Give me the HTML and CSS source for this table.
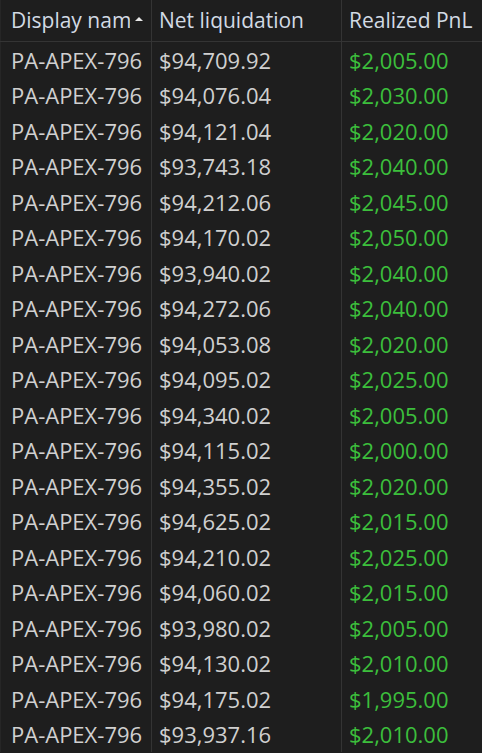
FILE: index.html
```html
<!DOCTYPE html>
<html lang="en">
<head>
    <meta charset="UTF-8">
    <title>Accounts</title>
    <link rel="stylesheet" href="styles.css">
</head>
<body>
<div class="grid">

    <!-- header -->
    <div class="row head">
        <div class="cell name sorted"><span class="label">Display name</span><span class="sort-arrow"></span></div>
        <div class="cell">Net liquidation</div>
        <div class="cell">Realized PnL</div>
    </div>

    <!-- rows -->
    <div class="row"><div class="cell name">PA-APEX-796</div><div class="cell">$94,709.92</div><div class="cell pos">$2,005.00</div></div>
    <div class="row"><div class="cell name">PA-APEX-796</div><div class="cell">$94,076.04</div><div class="cell pos">$2,030.00</div></div>
    <div class="row"><div class="cell name">PA-APEX-796</div><div class="cell">$94,121.04</div><div class="cell pos">$2,020.00</div></div>
    <div class="row"><div class="cell name">PA-APEX-796</div><div class="cell">$93,743.18</div><div class="cell pos">$2,040.00</div></div>
    <div class="row"><div class="cell name">PA-APEX-796</div><div class="cell">$94,212.06</div><div class="cell pos">$2,045.00</div></div>
    <div class="row"><div class="cell name">PA-APEX-796</div><div class="cell">$94,170.02</div><div class="cell pos">$2,050.00</div></div>
    <div class="row"><div class="cell name">PA-APEX-796</div><div class="cell">$93,940.02</div><div class="cell pos">$2,040.00</div></div>
    <div class="row"><div class="cell name">PA-APEX-796</div><div class="cell">$94,272.06</div><div class="cell pos">$2,040.00</div></div>
    <div class="row"><div class="cell name">PA-APEX-796</div><div class="cell">$94,053.08</div><div class="cell pos">$2,020.00</div></div>
    <div class="row"><div class="cell name">PA-APEX-796</div><div class="cell">$94,095.02</div><div class="cell pos">$2,025.00</div></div>
    <div class="row"><div class="cell name">PA-APEX-796</div><div class="cell">$94,340.02</div><div class="cell pos">$2,005.00</div></div>
    <div class="row"><div class="cell name">PA-APEX-796</div><div class="cell">$94,115.02</div><div class="cell pos">$2,000.00</div></div>
    <div class="row"><div class="cell name">PA-APEX-796</div><div class="cell">$94,355.02</div><div class="cell pos">$2,020.00</div></div>
    <div class="row"><div class="cell name">PA-APEX-796</div><div class="cell">$94,625.02</div><div class="cell pos">$2,015.00</div></div>
    <div class="row"><div class="cell name">PA-APEX-796</div><div class="cell">$94,210.02</div><div class="cell pos">$2,025.00</div></div>
    <div class="row"><div class="cell name">PA-APEX-796</div><div class="cell">$94,060.02</div><div class="cell pos">$2,015.00</div></div>
    <div class="row"><div class="cell name">PA-APEX-796</div><div class="cell">$93,980.02</div><div class="cell pos">$2,005.00</div></div>
    <div class="row"><div class="cell name">PA-APEX-796</div><div class="cell">$94,130.02</div><div class="cell pos">$2,010.00</div></div>
    <div class="row"><div class="cell name">PA-APEX-796</div><div class="cell">$94,175.02</div><div class="cell pos">$1,995.00</div></div>
    <div class="row"><div class="cell name">PA-APEX-796</div><div class="cell">$93,937.16</div><div class="cell pos">$2,010.00</div></div>
</div>
</body>
</html>
```

FILE: styles.css
```css
html, body {
    margin: 0;
    padding: 0;
    background-color: #1e1e1e;
}

body {
    font-family: "Open Sans", "Noto Sans", sans-serif;
    font-size: 22px;
    color: #d0d0d0;
    overflow: hidden;
}

.grid {
    width: 482px;
}

.row {
    display: grid;
    grid-template-columns: 151px 190px 1fr;
    height: 35.5px;
    align-items: stretch;
}

.row.head {
    height: 42px;
    font-size: 21px;
    border-bottom: 1px solid #343434;
    box-sizing: border-box;
    color: #d2dae4;
}

.cell {
    display: flex;
    align-items: center;
    padding-left: 7px;
    white-space: nowrap;
    overflow: hidden;
    border-left: 1px solid #343434;
}

.cell.name {
    padding-left: 10px;
    border-left: 1px solid #262626;
}

.head .cell {
    padding-bottom: 2px;
}

.sorted .label {
    width: 119px;
    flex-shrink: 0;
    overflow: hidden;
}

.sort-arrow {
    flex-shrink: 0;
    width: 0;
    height: 0;
    margin-left: 5px;
    margin-bottom: 2px;
    border-width: 0 4.5px 4px 4.5px;
    border-style: solid;
    border-color: transparent transparent #e8e8e8 transparent;
}

.pos {
    color: #3cbf3c;
}
```
